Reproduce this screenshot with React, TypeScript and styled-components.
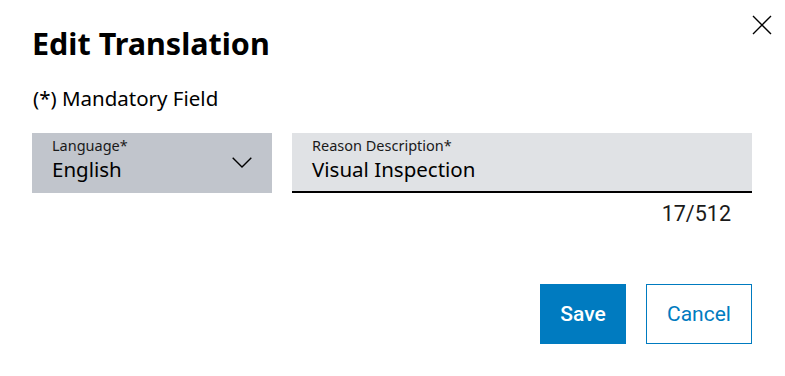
import React from "react";
import styled, { createGlobalStyle } from "styled-components";

const Global = createGlobalStyle`
  html, body { margin: 0; padding: 0; background: #fff; }
  body { font-family: "Noto Sans", "Open Sans", sans-serif; color: #000; }
  * { box-sizing: border-box; }
`;

const Dialog = styled.div`
  position: relative;
  width: 785px;
  height: 376px;
  padding: 25px 33px 0 32px;
  display: flex;
  flex-direction: column;
`;

const CloseButton = styled.button`
  position: absolute;
  top: 15px;
  right: 13px;
  width: 20px;
  height: 20px;
  padding: 0;
  border: none;
  background: transparent;
  display: flex;
  cursor: pointer;
`;

const Title = styled.h1`
  margin: 0;
  font-size: 30.5px;
  font-weight: 700;
  line-height: 36px;
`;

const Hint = styled.p`
  margin: 23px 0 0 1px;
  font-size: 20.5px;
  line-height: 28px;
`;

const FieldRow = styled.div`
  display: flex;
  gap: 20px;
  margin-top: 21px;
`;

const Field = styled.div<{ $width: number; $bg: string; $underline?: boolean }>`
  position: relative;
  width: ${(p) => p.$width}px;
  height: 60px;
  background: ${(p) => p.$bg};
  padding: 3px 20px 0 20px;
  border-bottom: ${(p) => (p.$underline ? "2px solid #000" : "none")};
  display: flex;
  flex-direction: column;
`;

const FieldLabel = styled.span`
  font-size: 14.5px;
  line-height: 18px;
  color: #1a1a1a;
`;

const FieldValue = styled.span`
  font-size: 20.5px;
  line-height: 26px;
  margin-top: 2px;
`;

const Chevron = styled.svg`
  position: absolute;
  right: 20px;
  top: 24px;
`;

const FieldColumn = styled.div`
  display: flex;
  flex-direction: column;
  align-items: flex-end;
`;

const Counter = styled.span`
  margin-top: 8px;
  margin-right: 21px;
  font-family: "Roboto", "Liberation Sans", sans-serif;
  font-size: 21.5px;
  line-height: 26px;
  color: #1a1a1a;
`;

const Actions = styled.div`
  display: flex;
  justify-content: flex-end;
  gap: 20px;
  margin-top: 57px;
`;

const Button = styled.button<{ $primary?: boolean }>`
  height: 60px;
  padding: 0;
  width: ${(p) => (p.$primary ? 86 : 106)}px;
  font-family: "Roboto", "Liberation Sans", sans-serif;
  font-size: 21px;
  font-weight: ${(p) => (p.$primary ? 500 : 400)};
  background: ${(p) => (p.$primary ? "#007bc0" : "#fff")};
  color: ${(p) => (p.$primary ? "#fff" : "#007bc0")};
  border: ${(p) => (p.$primary ? "none" : "1px solid #007bc0")};
  cursor: pointer;
`;

export default function App() {
  return (
    <>
      <Global />
      <Dialog>
        <CloseButton aria-label="Close">
          <svg width="20" height="20" viewBox="0 0 20 20">
            <path d="M1 1 L19 19 M19 1 L1 19" stroke="#000" strokeWidth="1.4" fill="none" />
          </svg>
        </CloseButton>
        <Title>Edit Translation</Title>
        <Hint>(*) Mandatory Field</Hint>
        <FieldRow>
          <Field $width={240} $bg="#c1c5cc">
            <FieldLabel>Language*</FieldLabel>
            <FieldValue>English</FieldValue>
            <Chevron width="20" height="11" viewBox="0 0 20 11">
              <path d="M0.7 0.7 L10 10 L19.3 0.7" stroke="#000" strokeWidth="1.4" fill="none" />
            </Chevron>
          </Field>
          <FieldColumn>
            <Field $width={460} $bg="#e0e2e5" $underline>
              <FieldLabel>Reason Description*</FieldLabel>
              <FieldValue>Visual Inspection</FieldValue>
            </Field>
            <Counter>17/512</Counter>
          </FieldColumn>
        </FieldRow>
        <Actions>
          <Button $primary>Save</Button>
          <Button>Cancel</Button>
        </Actions>
      </Dialog>
    </>
  );
}
